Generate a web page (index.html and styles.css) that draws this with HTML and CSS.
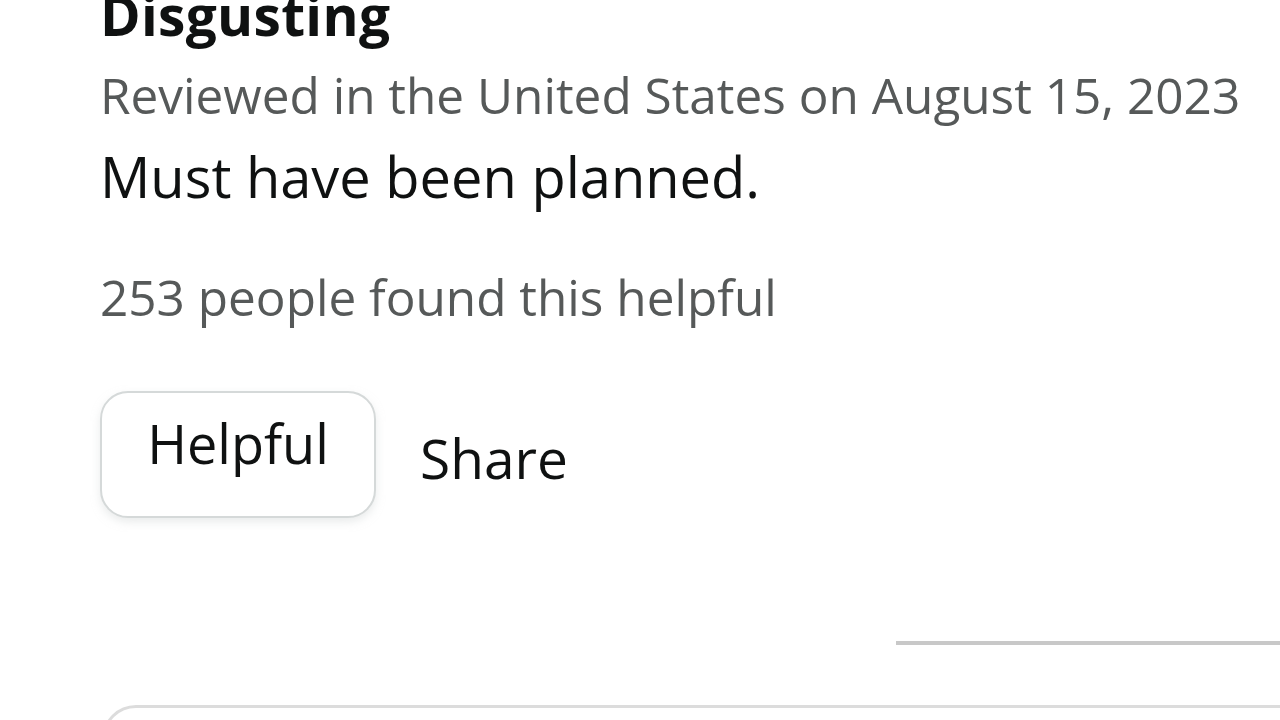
FILE: index.html
```html
<!DOCTYPE html>
<html lang="en">
<head>
    <meta charset="UTF-8">
    <meta name="viewport" content="width=device-width, initial-scale=1.0">
    <title>Review</title>
    <link rel="stylesheet" href="styles.css">
</head>
<body>
<div class="review">
    <h3 class="review-title">Disgusting</h3>
    <div class="review-date">Reviewed in the United States on August 15, 2023</div>
    <div class="review-body">Must have been planned.</div>
    <div class="review-votes">253 people found this helpful</div>
    <div class="review-actions">
        <button class="btn-helpful">Helpful</button>
        <span class="share">Share</span>
    </div>
    <div class="divider-row">
        <div class="divider"></div>
    </div>
    <div class="next-box"></div>
</div>
</body>
</html>
```

FILE: styles.css
```css
body {
    font-family: "Open Sans", sans-serif;
    background-color: #fff;
    margin: 0;
    padding: 0;
    overflow: hidden;
    height: 720px;
}

.review {
    padding-left: 100px;
    margin-top: -15px;
}

.review-title {
    margin: 0;
    font-size: 55px;
    font-weight: 700;
    color: #0f1111;
    line-height: 60px;
    letter-spacing: 0.3px;
}

.review-date {
    margin-top: 20px;
    font-size: 49.5px;
    color: #565959;
    line-height: 60px;
    white-space: nowrap;
}

.review-body {
    margin-top: 19px;
    font-size: 56px;
    color: #0f1111;
    line-height: 64px;
}

.review-votes {
    margin-top: 59px;
    font-size: 49.5px;
    color: #565959;
    line-height: 60px;
}

.review-actions {
    display: flex;
    align-items: center;
    gap: 44px;
    margin-top: 64px;
}

.btn-helpful {
    width: 276px;
    height: 127px;
    box-sizing: border-box;
    padding: 0 0 24px;
    font-family: inherit;
    font-size: 54px;
    color: #0f1111;
    background-color: #fff;
    border: 2px solid #d5d9d9;
    border-radius: 28px;
    box-shadow: 0 4px 8px rgba(213, 217, 217, 0.5);
}

.share {
    margin-top: 6px;
    font-size: 55px;
    color: #0f1111;
}

.divider-row {
    display: flex;
    justify-content: flex-end;
    margin-top: 123px;
    margin-left: -100px;
}

.divider {
    width: 384px;
    height: 4px;
    background-color: #c8c8c8;
}

.next-box {
    margin-top: 60px;
    height: 80px;
    border: 3px solid #dcdcdc;
    border-right: none;
    border-radius: 34px 0 0 0;
    margin-left: 2px;
}
```
